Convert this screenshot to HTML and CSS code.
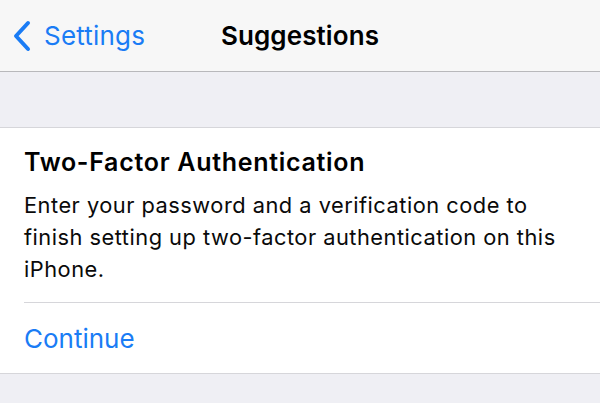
FILE: index.html
```html
<!DOCTYPE html>
<html>
<head>
<meta charset="utf-8">
<link rel="stylesheet" href="styles.css">
</head>
<body>
<header class="nav">
  <a class="back">
    <svg class="chev" width="20" height="32" viewBox="0 0 20 32"><path d="M16 3 L4 16 L16 29" fill="none" stroke="#1a7cf5" stroke-width="4" stroke-linecap="round" stroke-linejoin="round"/></svg>
    <span>Settings</span>
  </a>
  <h1 class="title">Suggestions</h1>
  <div></div>
</header>
<div class="spacer"></div>
<section class="card">
  <div class="inset">
    <div class="content">
      <h2 class="card-title">Two-Factor Authentication</h2>
      <p class="card-text">Enter your password and a verification code to finish setting up two-factor authentication on this iPhone.</p>
    </div>
    <div class="action">Continue</div>
  </div>
</section>
</body>
</html>
```
FILE: styles.css
```css
html, body {
  margin: 0;
  padding: 0;
}
body {
  background: #efeff4;
  font-family: Inter, "Liberation Sans", sans-serif;
  width: 600px;
  height: 403px;
  overflow: hidden;
}
.nav {
  height: 71px;
  background: #f7f7f7;
  border-bottom: 1px solid #b8b8bb;
  display: grid;
  grid-template-columns: 1fr auto 1fr;
  align-items: center;
}
.back {
  display: flex;
  align-items: center;
  gap: 12px;
  padding-left: 12px;
  color: #1a7cf5;
  font-size: 26px;
  letter-spacing: 0.2px;
}
.chev {
  display: block;
}
.title {
  margin: 0;
  font-size: 26px;
  font-weight: 600;
  color: #000;
  letter-spacing: 0.1px;
}
.spacer {
  height: 55px;
}
.card {
  background: #fff;
  border-top: 1px solid #d6d6da;
  border-bottom: 1px solid #d6d6da;
  padding-left: 24px;
}
.content {
  padding: 19px 31px 17px 0;
  border-bottom: 1px solid #d6d6da;
}
.card-title {
  margin: 0 0 12px;
  font-size: 25px;
  font-weight: 600;
  letter-spacing: 0.7px;
  color: #000;
}
.card-text {
  margin: 0;
  font-size: 21.8px;
  letter-spacing: 0.5px;
  line-height: 32px;
  color: #0a0a0a;
}
.action {
  height: 70px;
  display: flex;
  align-items: center;
  color: #1a7cf5;
  font-size: 26px;
}
```
